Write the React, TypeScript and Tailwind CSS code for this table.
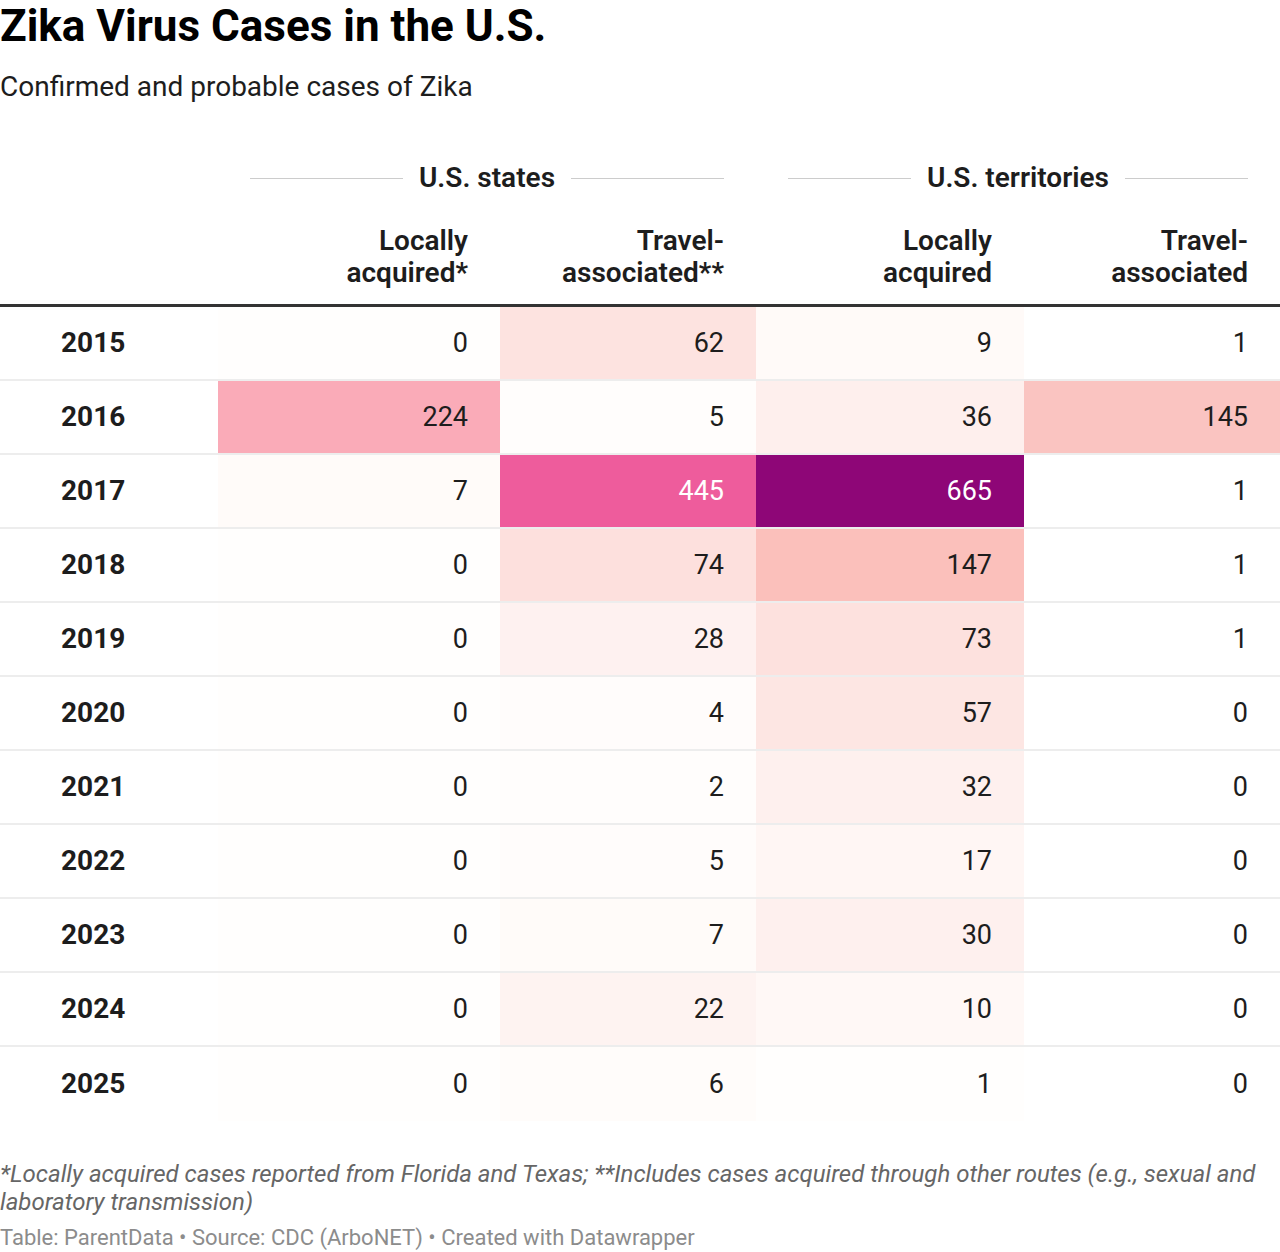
const rows: { year: string; cells: { v: number; bg: string; light?: boolean }[] }[] = [
  { year: "2015", cells: [{ v: 0, bg: "#fffefd" }, { v: 62, bg: "#fde3e0" }, { v: 9, bg: "#fffaf8" }, { v: 1, bg: "#ffffff" }] },
  { year: "2016", cells: [{ v: 224, bg: "#faabb8" }, { v: 5, bg: "#fffdfc" }, { v: 36, bg: "#feefed" }, { v: 145, bg: "#fac4c1" }] },
  { year: "2017", cells: [{ v: 7, bg: "#fffbf9" }, { v: 445, bg: "#ee5c9c", light: true }, { v: 665, bg: "#8e0677", light: true }, { v: 1, bg: "#ffffff" }] },
  { year: "2018", cells: [{ v: 0, bg: "#fffefd" }, { v: 74, bg: "#fde0dd" }, { v: 147, bg: "#fbc0bb" }, { v: 1, bg: "#ffffff" }] },
  { year: "2019", cells: [{ v: 0, bg: "#fffefd" }, { v: 28, bg: "#fef1f0" }, { v: 73, bg: "#fde1de" }, { v: 1, bg: "#ffffff" }] },
  { year: "2020", cells: [{ v: 0, bg: "#fffefd" }, { v: 4, bg: "#fffcfb" }, { v: 57, bg: "#fde6e3" }, { v: 0, bg: "#ffffff" }] },
  { year: "2021", cells: [{ v: 0, bg: "#fffefd" }, { v: 2, bg: "#fffdfc" }, { v: 32, bg: "#fef0ee" }, { v: 0, bg: "#ffffff" }] },
  { year: "2022", cells: [{ v: 0, bg: "#fffefd" }, { v: 5, bg: "#fffcfb" }, { v: 17, bg: "#fff6f4" }, { v: 0, bg: "#ffffff" }] },
  { year: "2023", cells: [{ v: 0, bg: "#fffefd" }, { v: 7, bg: "#fffbf9" }, { v: 30, bg: "#fef0ee" }, { v: 0, bg: "#ffffff" }] },
  { year: "2024", cells: [{ v: 0, bg: "#fffefd" }, { v: 22, bg: "#fef3f1" }, { v: 10, bg: "#fff8f6" }, { v: 0, bg: "#ffffff" }] },
  { year: "2025", cells: [{ v: 0, bg: "#fffefd" }, { v: 6, bg: "#fffcfa" }, { v: 1, bg: "#fffefd" }, { v: 0, bg: "#ffffff" }] },
]

const cols = "grid grid-cols-[218px_282px_256px_268px_256px]"

function GroupHeader({ label }: { label: string }) {
  return (
    <div className="flex items-center gap-4 pl-8 pr-8">
      <div className="h-px flex-1 bg-[#cccccc]" />
      <span className="text-[28px] font-semibold text-[#1d1d1d]">{label}</span>
      <div className="h-px flex-1 bg-[#cccccc]" />
    </div>
  )
}

export default function App() {
  return (
    <div className="w-[1280px] h-[1252px] bg-white font-['Roboto',sans-serif] text-[#1d1d1d]">
      <h1 className="text-[44px] font-bold leading-[52px] text-black">
        Zika Virus Cases in the U.S.
      </h1>
      <p className="mt-[19px] text-[28px] leading-[32px] text-[#1d1d1d]">Confirmed and probable cases of Zika</p>

      <div className="mt-[54px]">
        <div className={`${cols} h-[40px] items-center`}>
          <div />
          <div className="col-span-2">
            <GroupHeader label="U.S. states" />
          </div>
          <div className="col-span-2">
            <GroupHeader label="U.S. territories" />
          </div>
        </div>
        <div className={`${cols} pt-[28px] pb-[15px] border-b-[3px] border-[#333333]`}>
          <div />
          {["Locally\nacquired*", "Travel-\nassociated**", "Locally\nacquired", "Travel-\nassociated"].map((h) => (
            <div key={h} className="pr-8 text-right text-[28px] font-semibold leading-[32px] whitespace-pre-line">
              {h}
            </div>
          ))}
        </div>
        {rows.map((r, i) => (
          <div
            key={r.year}
            className={`${cols} h-[74px] ${i < rows.length - 1 ? "border-b-2 border-black/[0.07]" : ""}`}
          >
            <div className="flex items-center pl-[61px] text-[28px] font-bold bg-white">{r.year}</div>
            {r.cells.map((c, j) => (
              <div
                key={j}
                className={`flex items-center justify-end pr-8 text-[27px] ${c.light ? "text-white" : "text-[#1d1d1d]"}`}
                style={{ backgroundColor: c.bg }}
              >
                {c.v}
              </div>
            ))}
          </div>
        ))}
      </div>

      <p className="mt-[39px] text-[24px] italic leading-[28px] text-[#666666]">
        *Locally acquired cases reported from Florida and Texas; **Includes cases acquired through other routes (e.g., sexual and laboratory transmission)
      </p>
      <p className="mt-[8px] text-[22px] leading-[28px] text-[#8c8c8c]">
        Table: ParentData • Source: CDC (ArboNET) • Created with Datawrapper
      </p>
    </div>
  )
}
